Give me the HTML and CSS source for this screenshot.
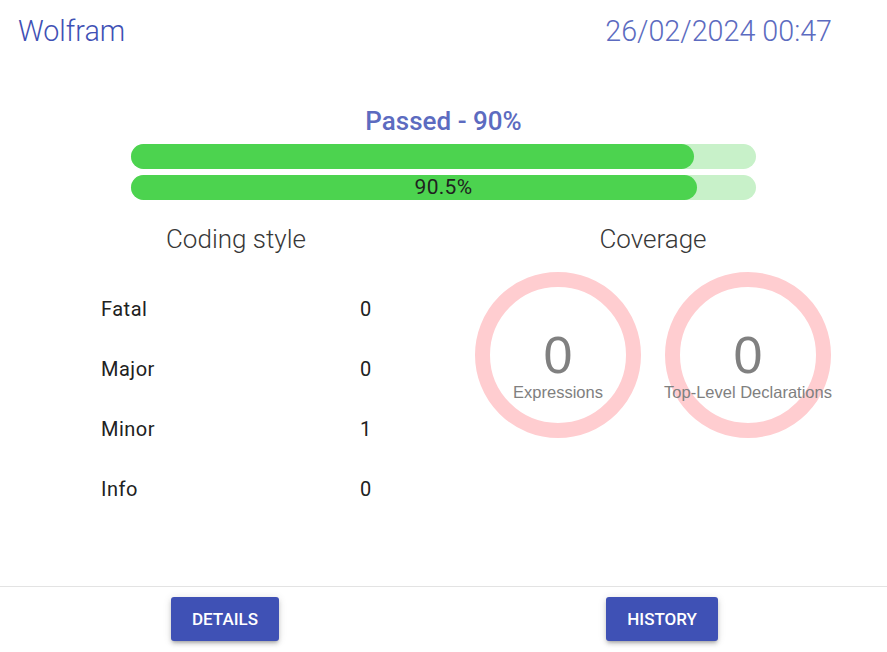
FILE: index.html
```html
<!DOCTYPE html>
<html lang="en">
<head>
<meta charset="utf-8">
<title>Wolfram</title>
<link rel="stylesheet" href="styles.css">
</head>
<body>
<div class="page">
  <header class="top">
    <div class="brand">Wolfram</div>
    <div class="date">26/02/2024 00:47</div>
  </header>

  <section class="summary">
    <div class="status">Passed - 90%</div>
    <div class="bar"><div class="fill" style="width: 90%"></div></div>
    <div class="bar"><div class="fill" style="width: 90.5%"></div><span class="bar-label">90.5%</span></div>
  </section>

  <section class="details">
    <div class="col col-left">
      <h2 class="col-title">Coding style</h2>
      <div class="rows">
        <div class="row"><span class="row-name">Fatal</span><span class="row-val">0</span></div>
        <div class="row"><span class="row-name">Major</span><span class="row-val">0</span></div>
        <div class="row"><span class="row-name">Minor</span><span class="row-val">1</span></div>
        <div class="row"><span class="row-name">Info</span><span class="row-val">0</span></div>
      </div>
    </div>
    <div class="col col-right">
      <h2 class="col-title">Coverage</h2>
      <div class="rings">
        <div class="ring"><div class="ring-num">0</div><div class="ring-label">Expressions</div></div>
        <div class="ring"><div class="ring-num">0</div><div class="ring-label">Top-Level Declarations</div></div>
      </div>
    </div>
  </section>

  <footer class="actions">
    <button class="btn">Details</button>
    <button class="btn">History</button>
  </footer>
</div>
</body>
</html>
```
FILE: styles.css
```css
* { box-sizing: border-box; }
html, body { margin: 0; padding: 0; background: #fff; }
body { font-family: Roboto, "Noto Sans", sans-serif; }

.page {
  height: 652px;
  display: flex;
  flex-direction: column;
}

.top {
  display: flex;
  justify-content: space-between;
  align-items: baseline;
  padding: 14px 55px 0 18px;
  font-weight: 300;
  font-size: 28.7px;
  line-height: 35px;
}
.brand { color: #3f51b5; }
.date { color: #5c6bc0; }

.summary {
  width: 625px;
  margin: 57px auto 0;
  display: flex;
  flex-direction: column;
  gap: 6px;
}
.status {
  text-align: center;
  color: #5c6bc0;
  font-weight: 500;
  font-size: 26px;
  line-height: 30px;
  margin-bottom: 2px;
}
.bar {
  position: relative;
  height: 25px;
  border-radius: 13px;
  background: #c8f1c9;
}
.fill {
  height: 100%;
  border-radius: 13px;
  background: #4cd34f;
}
.bar-label {
  position: absolute;
  inset: 0;
  text-align: center;
  font-size: 21px;
  line-height: 25px;
  letter-spacing: 0.3px;
  color: #1f1f1f;
}

.details {
  display: grid;
  grid-template-columns: 436px 398px;
  margin: 24px 0 0 18px;
}
.col-title {
  margin: 0;
  text-align: center;
  font-weight: 300;
  font-size: 26px;
  line-height: 30px;
  color: #383838;
}
.rows {
  margin-top: 25px;
  padding-left: 83px;
}
.row {
  display: grid;
  grid-template-columns: 259px auto;
  height: 60px;
  align-items: center;
  font-size: 20px;
  color: #212121;
  letter-spacing: 0.5px;
}

.rings {
  margin-top: 18px;
  display: flex;
  justify-content: center;
  gap: 24px;
}
.ring {
  width: 166px;
  height: 166px;
  border: 15px solid #ffcdd0;
  border-radius: 50%;
  display: flex;
  flex-direction: column;
  align-items: center;
  justify-content: center;
  padding-top: 18px;
  font-family: "Liberation Sans", Arial, sans-serif;
  color: #808080;
}
.ring-num {
  font-size: 52px;
  line-height: 58px;
}
.ring-label {
  margin-top: -2px;
  font-size: 16.5px;
  line-height: 20px;
  white-space: nowrap;
}

.actions {
  margin-top: auto;
  border-top: 1px solid #e3e3e3;
  padding: 10px 169px 11px 171px;
  display: flex;
  justify-content: space-between;
}
.btn {
  height: 44px;
  padding: 0 21px;
  border: none;
  border-radius: 3px;
  background: #3f51b5;
  color: #fff;
  font-family: Roboto, sans-serif;
  font-weight: 500;
  font-size: 17px;
  text-transform: uppercase;
  box-shadow: 0 3px 3px -2px rgba(0,0,0,.2), 0 3px 4px 0 rgba(0,0,0,.14), 0 1px 8px 0 rgba(0,0,0,.12);
}
```
